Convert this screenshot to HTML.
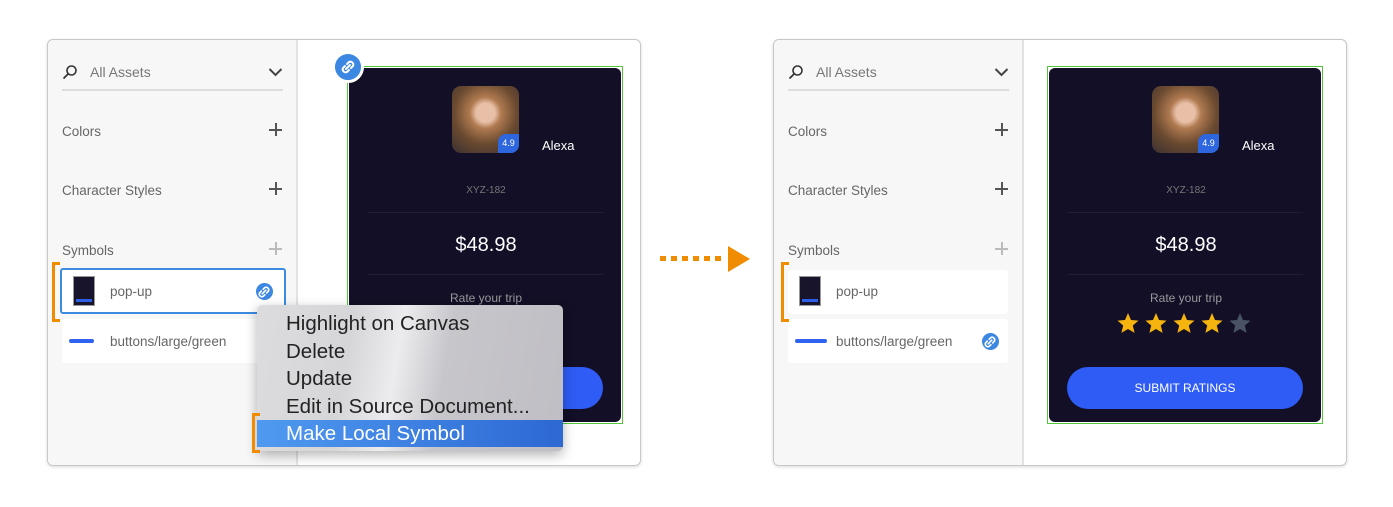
<!DOCTYPE html>
<html><head><meta charset="utf-8"><style>
*{box-sizing:border-box;margin:0;padding:0}
body{width:1393px;height:507px;background:#fff;position:relative;overflow:hidden;font-family:"Liberation Sans",sans-serif}
.a{position:absolute}
.panel{position:absolute;border:1px solid #c8c8c8;border-radius:6px;background:#fff;box-shadow:0 1px 3px rgba(0,0,0,.15);overflow:hidden}
.side{position:absolute;left:0;top:0;bottom:0;width:250px;background:#f7f7f7;border-right:2px solid #e2e2e2}
.lbl{position:absolute;font-size:13.5px;color:#666;line-height:16px}
.plus{position:absolute;width:13px;height:13px}
.plus:before,.plus:after{content:"";position:absolute;background:#555}
.plus:before{left:6px;top:0;width:1.5px;height:13px}
.plus:after{top:6px;left:0;height:1.5px;width:13px}
.plus.l:before,.plus.l:after{background:#bbb}
.item{position:absolute;background:#fff;border-radius:3px}
.thumb{position:absolute;width:22px;height:30px;background:#17142c;border:1px solid #999}
.thumb i{position:absolute;left:2px;right:2px;bottom:3px;height:3px;background:#2f5fe6}
.pill{position:absolute;width:25px;height:4px;border-radius:2px;background:#2f63f0}
.lnk{position:absolute;border-radius:50%;background:#3b87e2}
.card{position:absolute;background:#120f26;border-radius:6px}
.gb{position:absolute;border:1.5px solid #52c73a}
.bracket{position:absolute;border:3px solid #f08c00;border-right:none;width:8px}
</style></head><body>

<div class="panel" style="left:47px;top:39px;width:594px;height:427px">
 <div class="side">
  <svg class="a" style="left:14px;top:24px" width="16" height="16" viewBox="0 0 16 16"><circle cx="9.5" cy="6.5" r="4.5" fill="none" stroke="#333" stroke-width="1.6"/><line x1="6" y1="10" x2="1.5" y2="14.5" stroke="#333" stroke-width="1.8"/></svg>
  <div class="lbl" style="left:42px;top:24px;font-size:14px;color:#777">All Assets</div>
  <svg class="a" style="left:220px;top:27px" width="15" height="10" viewBox="0 0 15 10"><polyline points="1.5,2 7.5,8 13.5,2" fill="none" stroke="#444" stroke-width="2"/></svg>
  <div class="a" style="left:14px;top:49px;width:221px;height:2px;background:#ddd"></div>
  <div class="lbl" style="left:14px;top:84px">Colors</div><div class="plus" style="left:221px;top:83px"></div>
  <div class="lbl" style="left:14px;top:143px">Character Styles</div><div class="plus" style="left:221px;top:142px"></div>
  <div class="lbl" style="left:14px;top:203px">Symbols</div><div class="plus l" style="left:221px;top:202px"></div>
  <div class="item" style="left:12px;top:228px;width:226px;height:46px;border:2px solid #3c8be0"></div>
  <div class="thumb" style="left:25px;top:236px"><i></i></div>
  <div class="lbl" style="left:62px;top:244px">pop-up</div>
  <div class="lnk" style="left:208px;top:243px;width:17px;height:17px"></div>
  <div class="item" style="left:14px;top:279px;width:210px;height:44px"></div>
  <div class="pill" style="left:21px;top:299px"></div>
  <div class="lbl" style="left:62px;top:294px">buttons/large/green</div>
 </div>
 <div class="gb" style="left:299px;top:26px;width:276px;height:358px"></div>
 <div class="card" style="left:301px;top:28px;width:272px;height:354px">
  <div class="a" style="left:103px;top:18px;width:67px;height:67px;border-radius:9px;background:radial-gradient(circle at 50% 40%,#e8c0a8 0 18%,#b07a50 30%,#6a4a30 60%,#3a3030 100%)"><div class="a" style="right:0;bottom:0;width:21px;height:19px;background:#2e66e0;border-radius:8px 0 8px 0;color:#fff;font-size:9px;text-align:center;line-height:19px">4.9</div></div>
  <div class="a" style="left:193px;top:70px;color:#fff;font-size:13px">Alexa</div>
  <div class="a" style="left:0;width:274px;top:117px;text-align:center;color:#777;font-size:10px">XYZ-182</div>
  <div class="a" style="left:18px;top:144px;width:236px;height:1px;background:#201d36"></div>
  <div class="a" style="left:0;width:274px;top:166px;text-align:center;color:#fff;font-size:20px">$48.98</div>
  <div class="a" style="left:18px;top:206px;width:236px;height:1px;background:#201d36"></div>
  <div class="a" style="left:0;width:274px;top:223px;text-align:center;color:#999;font-size:12px">Rate your trip</div>
  <div class="a" style="left:18px;top:299px;width:236px;height:42px;border-radius:21px;background:#2f5cf5"></div>
 </div>
 <div class="lnk" style="left:284px;top:11px;width:32px;height:32px;border:3px solid #fff"></div>
 <svg class="a" style="left:291px;top:18px" width="18" height="18" viewBox="0 0 18 18"><g fill="none" stroke="#fff" stroke-width="2" stroke-linecap="round"><path d="M8 6l2-2a3 3 0 0 1 4 4l-2 2"/><path d="M10 12l-2 2a3 3 0 0 1-4-4l2-2"/><path d="M7 11l4-4"/></g></svg>
</div>
<svg class="a" style="left:256px;top:284px" width="16" height="16" viewBox="0 0 18 18"><g fill="none" stroke="#fff" stroke-width="1.8" stroke-linecap="round"><path d="M8 6l2-2a3 3 0 0 1 4 4l-2 2"/><path d="M10 12l-2 2a3 3 0 0 1-4-4l2-2"/><path d="M7 11l4-4"/></g></svg>
<div class="bracket" style="left:52px;top:262px;height:60px"></div>

<div class="a" style="left:257px;top:305px;width:306px;height:146px;border-radius:5px;background:linear-gradient(100deg,#dcdcde 0%,#d6d6d9 30%,#ececee 45%,#c7c6cb 60%,#bfbec4 100%);box-shadow:0 4px 12px rgba(0,0,0,.3)">
 <div class="a" style="left:0;right:0;top:115px;height:27px;background:linear-gradient(90deg,#4f9af0,#2d68d3)"></div>
 <div class="a" style="left:29px;top:5px;font-size:20.5px;line-height:27.5px;color:#222">Highlight on Canvas<br>Delete<br>Update<br>Edit in Source Document...<br><span style="color:#fff">Make Local Symbol</span></div>
</div>
<div class="bracket" style="left:252px;top:413px;height:40px"></div>

<div class="a" style="left:660px;top:256px;width:62px;height:5px;background:repeating-linear-gradient(90deg,#f08c00 0 6px,transparent 6px 11px)"></div>
<div class="a" style="left:728px;top:246px;width:0;height:0;border-left:22px solid #f08c00;border-top:13px solid transparent;border-bottom:13px solid transparent"></div>

<div class="panel" style="left:773px;top:39px;width:574px;height:427px">
 <div class="side">
  <svg class="a" style="left:14px;top:24px" width="16" height="16" viewBox="0 0 16 16"><circle cx="9.5" cy="6.5" r="4.5" fill="none" stroke="#333" stroke-width="1.6"/><line x1="6" y1="10" x2="1.5" y2="14.5" stroke="#333" stroke-width="1.8"/></svg>
  <div class="lbl" style="left:42px;top:24px;font-size:14px;color:#777">All Assets</div>
  <svg class="a" style="left:220px;top:27px" width="15" height="10" viewBox="0 0 15 10"><polyline points="1.5,2 7.5,8 13.5,2" fill="none" stroke="#444" stroke-width="2"/></svg>
  <div class="a" style="left:14px;top:49px;width:221px;height:2px;background:#ddd"></div>
  <div class="lbl" style="left:14px;top:84px">Colors</div><div class="plus" style="left:221px;top:83px"></div>
  <div class="lbl" style="left:14px;top:143px">Character Styles</div><div class="plus" style="left:221px;top:142px"></div>
  <div class="lbl" style="left:14px;top:203px">Symbols</div><div class="plus l" style="left:221px;top:202px"></div>
  <div class="item" style="left:14px;top:230px;width:220px;height:44px"></div>
  <div class="thumb" style="left:25px;top:236px"><i></i></div>
  <div class="lbl" style="left:62px;top:244px">pop-up</div>
  <div class="item" style="left:14px;top:279px;width:220px;height:44px"></div>
  <div class="pill" style="left:21px;top:299px;width:32px"></div>
  <div class="lbl" style="left:62px;top:294px">buttons/large/green</div>
  <div class="lnk" style="left:208px;top:293px;width:17px;height:17px"></div>
 </div>
 <div class="gb" style="left:273px;top:26px;width:276px;height:358px"></div>
 <div class="card" style="left:275px;top:28px;width:272px;height:354px">
  <div class="a" style="left:103px;top:18px;width:67px;height:67px;border-radius:9px;background:radial-gradient(circle at 50% 40%,#e8c0a8 0 18%,#b07a50 30%,#6a4a30 60%,#3a3030 100%)"><div class="a" style="right:0;bottom:0;width:21px;height:19px;background:#2e66e0;border-radius:8px 0 8px 0;color:#fff;font-size:9px;text-align:center;line-height:19px">4.9</div></div>
  <div class="a" style="left:193px;top:70px;color:#fff;font-size:13px">Alexa</div>
  <div class="a" style="left:0;width:274px;top:117px;text-align:center;color:#777;font-size:10px">XYZ-182</div>
  <div class="a" style="left:18px;top:144px;width:236px;height:1px;background:#201d36"></div>
  <div class="a" style="left:0;width:274px;top:166px;text-align:center;color:#fff;font-size:20px">$48.98</div>
  <div class="a" style="left:18px;top:206px;width:236px;height:1px;background:#201d36"></div>
  <div class="a" style="left:0;width:274px;top:223px;text-align:center;color:#999;font-size:12px">Rate your trip</div>
  <svg class="a" style="left:68px;top:244px" width="140" height="24" viewBox="0 0 140 24">
   <defs><path id="s" d="M11 1l3 7 7.5.6-5.7 4.9 1.8 7.4L11 17l-6.6 3.9 1.8-7.4L.5 8.6 8 8z"/></defs>
   <use href="#s" x="0" fill="#f6b40e"/><use href="#s" x="28" fill="#f6b40e"/><use href="#s" x="56" fill="#f6b40e"/><use href="#s" x="84" fill="#f6b40e"/><use href="#s" x="112" fill="#4a5266"/>
  </svg>
  <div class="a" style="left:18px;top:299px;width:236px;height:42px;border-radius:21px;background:#2f5cf5;color:#fff;font-size:12px;text-align:center;line-height:42px">SUBMIT RATINGS</div>
 </div>
</div>
<svg class="a" style="left:982px;top:334px" width="16" height="16" viewBox="0 0 18 18"><g fill="none" stroke="#fff" stroke-width="1.8" stroke-linecap="round"><path d="M8 6l2-2a3 3 0 0 1 4 4l-2 2"/><path d="M10 12l-2 2a3 3 0 0 1-4-4l2-2"/><path d="M7 11l4-4"/></g></svg>
<div class="bracket" style="left:781px;top:262px;height:60px"></div>
</body></html>
